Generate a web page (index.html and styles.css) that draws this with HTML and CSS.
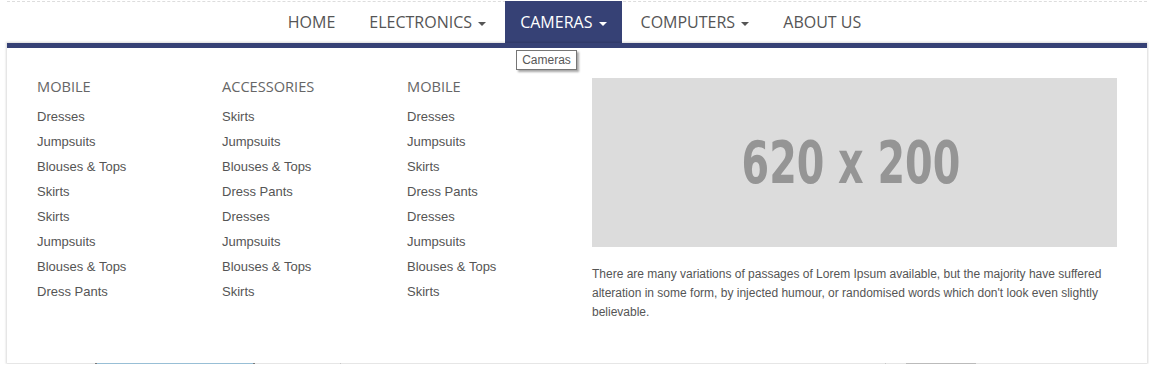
FILE: index.html
```html
<!DOCTYPE html>
<html lang="en">
<head>
  <meta charset="UTF-8">
  <title>Mega Menu</title>
  <meta name="viewport" content="width=device-width, initial-scale=1.0">
  <link rel="stylesheet" href="styles.css">
</head>
<body>

  <div class="site">
    <nav class="topbar">
      <ul class="menu">
        <li class="menu-item"><a href="#">Home</a></li>
        <li class="menu-item"><a href="#">Electronics <span class="caret"></span></a></li>
        <li class="menu-item active">
          <a href="#">Cameras <span class="caret"></span></a>
          <span class="tip">Cameras</span>
        </li>
        <li class="menu-item"><a href="#">Computers <span class="caret"></span></a></li>
        <li class="menu-item"><a href="#">About Us</a></li>
      </ul>
    </nav>

    <!-- page content, mostly hidden under the open menu -->
    <div class="products">
      <div class="product-thumb"></div>
      <div class="product-col"></div>
      <div class="product-col right">
        <div class="product-bar"></div>
      </div>
    </div>

    <!-- mega menu panel -->
    <div class="mega">
      <div class="mega-col">
        <h4>Mobile</h4>
        <ul>
          <li><a href="#">Dresses</a></li>
          <li><a href="#">Jumpsuits</a></li>
          <li><a href="#">Blouses &amp; Tops</a></li>
          <li><a href="#">Skirts</a></li>
          <li><a href="#">Skirts</a></li>
          <li><a href="#">Jumpsuits</a></li>
          <li><a href="#">Blouses &amp; Tops</a></li>
          <li><a href="#">Dress Pants</a></li>
        </ul>
      </div>
      <div class="mega-col">
        <h4>Accessories</h4>
        <ul>
          <li><a href="#">Skirts</a></li>
          <li><a href="#">Jumpsuits</a></li>
          <li><a href="#">Blouses &amp; Tops</a></li>
          <li><a href="#">Dress Pants</a></li>
          <li><a href="#">Dresses</a></li>
          <li><a href="#">Jumpsuits</a></li>
          <li><a href="#">Blouses &amp; Tops</a></li>
          <li><a href="#">Skirts</a></li>
        </ul>
      </div>
      <div class="mega-col">
        <h4>Mobile</h4>
        <ul>
          <li><a href="#">Dresses</a></li>
          <li><a href="#">Jumpsuits</a></li>
          <li><a href="#">Skirts</a></li>
          <li><a href="#">Dress Pants</a></li>
          <li><a href="#">Dresses</a></li>
          <li><a href="#">Jumpsuits</a></li>
          <li><a href="#">Blouses &amp; Tops</a></li>
          <li><a href="#">Skirts</a></li>
        </ul>
      </div>
      <div class="mega-feature">
        <div class="placeholder"><span>620 x 200</span></div>
        <p>There are many variations of passages of Lorem Ipsum available, but the majority have suffered alteration in some form, by injected humour, or randomised words which don't look even slightly believable.</p>
      </div>
    </div>
  </div>

</body>
</html>
```

FILE: styles.css
```css
html, body {
  margin: 0;
  padding: 0;
  background: #fff;
  overflow: hidden;
}
body {
  font-family: "Liberation Sans", Arial, sans-serif;
  color: #555;
  padding-top: 1px;
}
a {
  text-decoration: none;
}
ul {
  list-style: none;
  margin: 0;
  padding: 0;
}

.site {
  position: relative;
  width: 1140px;
  margin-left: 7px;
}

/*top navigation*/
.topbar {
  border-top: 1px dashed #ddd;
}
.menu {
  display: flex;
  justify-content: center;
  gap: 4px;
  margin-top: -1px;
  padding-right: 5px;
}
.menu-item {
  position: relative;
}
.menu-item a {
  display: block;
  height: 42px;
  line-height: 42px;
  padding: 0 15px;
  font-family: "Open Sans", sans-serif;
  font-size: 16px;
  text-transform: uppercase;
  color: #555;
}
.menu-item.active a {
  background: #364175;
  color: #fff;
}
.caret {
  display: inline-block;
  width: 0;
  height: 0;
  margin-left: 2px;
  vertical-align: middle;
  border-top: 4px solid;
  border-left: 4px solid transparent;
  border-right: 4px solid transparent;
}

/*native-looking title tooltip*/
.tip {
  position: absolute;
  left: 11px;
  top: 49px;
  z-index: 10;
  padding: 0 5px;
  height: 18px;
  line-height: 18px;
  font-size: 12px;
  color: #575757;
  background: #fff;
  border: 1px solid #767676;
  box-shadow: 2px 2px 2px rgba(0,0,0,0.35);
  white-space: nowrap;
}

/*page behind the menu*/
.products {
  display: flex;
  margin-top: 290px;
  height: 30px;
  border-top: 1px solid #eee;
}
.product-thumb {
  width: 156px;
  margin-left: 88px;
  background: #a9d4ee;
  border-left: 2px solid #8a8a8a;
  border-right: 2px solid #8a8a8a;
}
.product-col {
  width: 544px;
  margin-left: 85px;
  border-left: 1px solid #ddd;
}
.product-col.right {
  width: 200px;
  margin-left: 0;
  padding-left: 20px;
}
.product-bar {
  width: 70px;
  height: 30px;
  background: #d0d0d0;
}

/*mega menu*/
.mega {
  position: absolute;
  top: 42px;
  left: 0;
  width: 1140px;
  height: 320px;
  box-sizing: border-box;
  padding: 30px 30px 0 30px;
  background: #fff;
  border-top: 5px solid #364175;
  box-shadow: 0 0 2px 1px rgba(0,0,0,0.15);
  display: grid;
  grid-template-columns: 185px 185px 185px 1fr;
  align-items: start;
}
.mega-col h4 {
  margin: -1px 0 9px 0;
  font-family: "Open Sans", sans-serif;
  font-size: 14.6px;
  font-weight: normal;
  line-height: 18px;
  text-transform: uppercase;
  color: #666;
}
.mega-col li {
  line-height: 25px;
  font-size: 13px;
}
.mega-col a {
  color: #555;
}
.placeholder {
  height: 169px;
  background: #dcdcdc;
  display: flex;
  align-items: center;
  justify-content: center;
  font-family: "DejaVu Sans Condensed", sans-serif;
  font-weight: bold;
  font-size: 58px;
  color: #959595;
}
/*the original uses a narrow face, squeeze the condensed one to fit*/
.placeholder span {
  display: inline-block;
  transform: scaleX(0.76);
  margin-left: -8px;
}
.mega-feature p {
  margin: 18px 0 0 0;
  font-size: 12px;
  line-height: 19px;
  color: #555;
}
```
